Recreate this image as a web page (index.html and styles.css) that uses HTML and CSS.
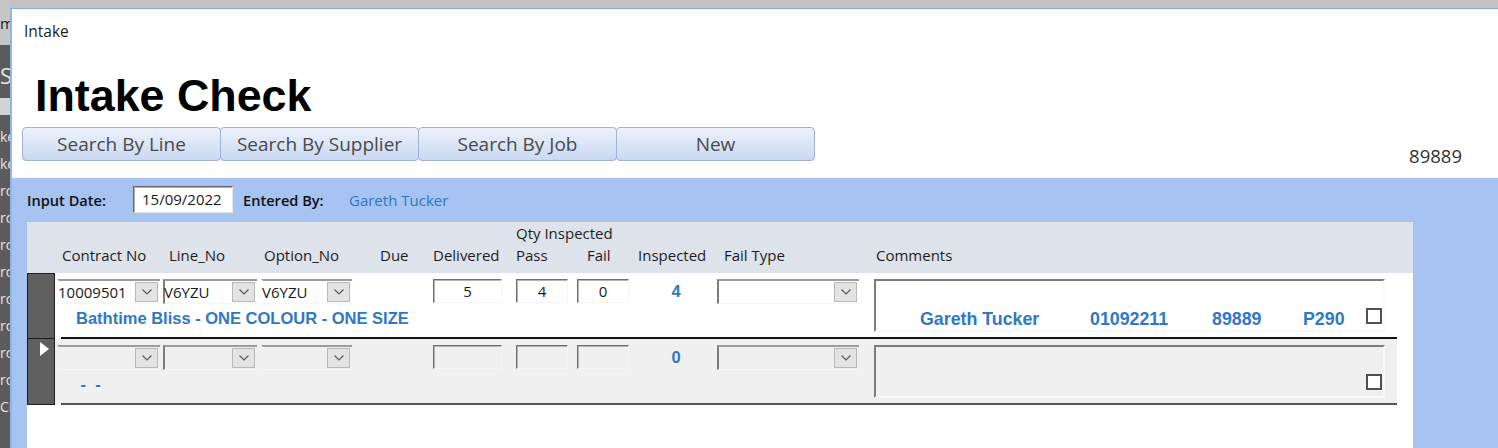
FILE: index.html
```html
<!DOCTYPE html>
<html lang="en">
<head>
<meta charset="utf-8">
<title>Intake</title>
<link rel="stylesheet" href="styles.css">
</head>
<body>
<div class="desktop">
  <aside class="nav">
    <div class="nav-top">m</div>
    <div class="nav-head">S</div>
    <div class="nav-sep"></div>
    <ul class="nav-list">
      <li>ke</li><li>ke</li><li>rc</li><li>rc</li><li>rc</li><li>rc</li><li>rc</li><li>rc</li><li>rc</li><li>rc</li><li>Ci</li>
    </ul>
  </aside>
  <div class="win-wrap">
    <main class="window">
      <div class="caption">Intake</div>
      <h1 class="title">Intake Check</h1>
      <div class="toolbar">
        <button class="btn">Search By Line</button>
        <button class="btn">Search By Supplier</button>
        <button class="btn">Search By Job</button>
        <button class="btn">New</button>
        <span class="job">89889</span>
      </div>
      <section class="band">
        <div class="date-row">
          <span class="lbl-b">Input Date:</span>
          <span class="date-input">15/09/2022</span>
          <span class="lbl-b lbl-gap">Entered By:</span>
          <span class="entered">Gareth Tucker</span>
        </div>
        <div class="panel">
          <div class="head">
            <span class="h h-contract">Contract No</span>
            <span class="h h-line">Line_No</span>
            <span class="h h-option">Option_No</span>
            <span class="h h-due">Due</span>
            <span class="h h-deliv">Delivered</span>
            <span class="h h-qty">Qty Inspected</span>
            <span class="h h-pass">Pass</span>
            <span class="h h-fail">Fail</span>
            <span class="h h-insp">Inspected</span>
            <span class="h h-type">Fail Type</span>
            <span class="h h-comm">Comments</span>
          </div>

          <div class="rec">
            <div class="selector"></div>
            <div class="rec-body">
              <div class="fields">
                <div class="combo c-contract"><span class="combo-text">10009501</span><span class="drop"><svg width="10" height="6" viewBox="0 0 10 6"><polyline points="0.5,0.5 5,5 9.5,0.5" fill="none" stroke="#5a5a5a" stroke-width="1.2"/></svg></span></div>
                <div class="combo c-line sunk-left"><span class="combo-text">V6YZU</span><span class="drop"><svg width="10" height="6" viewBox="0 0 10 6"><polyline points="0.5,0.5 5,5 9.5,0.5" fill="none" stroke="#5a5a5a" stroke-width="1.2"/></svg></span></div>
                <div class="combo c-option"><span class="combo-text">V6YZU</span><span class="drop"><svg width="10" height="6" viewBox="0 0 10 6"><polyline points="0.5,0.5 5,5 9.5,0.5" fill="none" stroke="#5a5a5a" stroke-width="1.2"/></svg></span></div>
                <div class="box f-deliv">5</div>
                <div class="box f-pass">4</div>
                <div class="box f-fail">0</div>
                <div class="insp">4</div>
                <div class="combo c-type sunk-left"><span class="combo-text"></span><span class="drop"><svg width="10" height="6" viewBox="0 0 10 6"><polyline points="0.5,0.5 5,5 9.5,0.5" fill="none" stroke="#5a5a5a" stroke-width="1.2"/></svg></span></div>
                <div class="comments">
                  <div class="comm-line">
                    <span class="cf cf-name">Gareth Tucker</span>
                    <span class="cf">01092211</span>
                    <span class="cf">89889</span>
                    <span class="cf">P290</span>
                    <span class="check"></span>
                  </div>
                </div>
                <div class="desc">Bathtime Bliss - ONE COLOUR - ONE SIZE</div>
              </div>
              <div class="rule"></div>
            </div>
          </div>

          <div class="rec rec-new">
            <div class="selector"><span class="arrow"></span></div>
            <div class="rec-body">
              <div class="fields">
                <div class="combo c-contract"><span class="combo-text"></span><span class="drop"><svg width="10" height="6" viewBox="0 0 10 6"><polyline points="0.5,0.5 5,5 9.5,0.5" fill="none" stroke="#5a5a5a" stroke-width="1.2"/></svg></span></div>
                <div class="combo c-line sunk-left"><span class="combo-text"></span><span class="drop"><svg width="10" height="6" viewBox="0 0 10 6"><polyline points="0.5,0.5 5,5 9.5,0.5" fill="none" stroke="#5a5a5a" stroke-width="1.2"/></svg></span></div>
                <div class="combo c-option"><span class="combo-text"></span><span class="drop"><svg width="10" height="6" viewBox="0 0 10 6"><polyline points="0.5,0.5 5,5 9.5,0.5" fill="none" stroke="#5a5a5a" stroke-width="1.2"/></svg></span></div>
                <div class="box f-deliv"></div>
                <div class="box f-pass"></div>
                <div class="box f-fail"></div>
                <div class="insp">0</div>
                <div class="combo c-type sunk-left"><span class="combo-text"></span><span class="drop"><svg width="10" height="6" viewBox="0 0 10 6"><polyline points="0.5,0.5 5,5 9.5,0.5" fill="none" stroke="#5a5a5a" stroke-width="1.2"/></svg></span></div>
                <div class="comments">
                  <div class="comm-line">
                    <span class="cf cf-name"></span>
                    <span class="cf"></span>
                    <span class="cf"></span>
                    <span class="cf"></span>
                    <span class="check"></span>
                  </div>
                </div>
                <div class="desc"> -  - </div>
              </div>
              <div class="rule"></div>
            </div>
          </div>
        </div>
      </section>
    </main>
  </div>
</div>
</body>
</html>
```

FILE: styles.css
```css
html, body {
  margin: 0;
  height: 448px;
  overflow: hidden;
}
body {
  background: #c2c2c2;
  font-family: "Open Sans", "Noto Sans", sans-serif;
}
.desktop {
  display: flex;
  height: 448px;
}

/* background application navigation strip */
.nav {
  width: 10px;
  flex: none;
  overflow: hidden;
  background: #5b5b5b;
  color: #e4e4e4;
  white-space: nowrap;
  font-size: 14px;
}
.nav-top {
  height: 45px;
  box-sizing: border-box;
  padding-top: 12px;
  line-height: 22px;
  background: #c6c6c6;
  color: #222;
  font-size: 15px;
}
.nav-head {
  height: 53px;
  box-sizing: border-box;
  padding-top: 19px;
  line-height: 22px;
  font-size: 22px;
}
.nav-sep {
  height: 17px;
  background: #d3d3d3;
}
.nav-list {
  list-style: none;
  margin: 0;
  padding: 8px 0 0;
}
.nav-list li {
  height: 27px;
  line-height: 27px;
}

/* form window */
.win-wrap {
  flex: 1;
  padding-top: 8px;
  display: flex;
  flex-direction: column;
  min-width: 0;
}
.window {
  flex: 1;
  background: #fff;
  border-top: 1px solid #86aee6;
  border-left: 2px solid #8fb5ea;
  display: flex;
  flex-direction: column;
  min-height: 0;
}
.caption {
  font-size: 15.5px;
  line-height: 21px;
  padding: 12px 0 0 12px;
  color: #1e1e1e;
}
.title {
  margin: 29px 0 0;
  padding-left: 23px;
  font: bold 44.8px/49px "Liberation Sans", Arial, sans-serif;
  color: #000;
}
.toolbar {
  display: flex;
  align-items: flex-start;
  margin-top: 7px;
  padding-left: 10px;
  height: 34px;
}
.btn {
  width: 199px;
  height: 34px;
  box-sizing: border-box;
  margin: 0 0 0 -1px;
  padding: 0;
  border: 1px solid #9fb3d7;
  border-radius: 4px;
  background: linear-gradient(#edf2fb, #d9e4f6 55%, #c9d8f1);
  font-family: "Open Sans", "Noto Sans", sans-serif;
  font-size: 19px;
  color: #4a4a4a;
}
.btn:first-child {
  margin-left: 0;
}
.job {
  margin: 16px 36px 0 auto;
  font-size: 18.5px;
  line-height: 25px;
  color: #333;
}

/* blue detail band */
.band {
  flex: 1;
  margin-top: 17px;
  background: #a6c3f1;
  padding: 8px 0 0 15px;
  display: flex;
  flex-direction: column;
  min-height: 0;
}
.date-row {
  display: flex;
  align-items: center;
  height: 27px;
}
.lbl-b {
  width: 106px;
  font-size: 14.6px;
  font-weight: 600;
  color: #111;
}
.lbl-gap {
  margin-left: 10px;
}
.date-input {
  width: 100px;
  height: 27px;
  box-sizing: border-box;
  background: #fff;
  border: 1px solid;
  border-color: #6a6a6a #e6e6e6 #e6e6e6 #6a6a6a;
  box-shadow: inset 1px 1px 0 #b0b0b0;
  padding-left: 8px;
  font-size: 15px;
  line-height: 25px;
  color: #1a1a1a;
}
.entered {
  font-size: 15px;
  color: #2f78c4;
}

.panel {
  width: 1386px;
  flex: 1;
  margin-top: 9px;
  background: #fff;
}
.head,
.fields {
  display: grid;
  grid-template-columns: 106px 98px 104px 68px 83px 61px 52px 88px 157px 511px;
}
.head {
  height: 51px;
  box-sizing: border-box;
  padding-left: 30px;
  grid-template-rows: 22px 22px;
  background: #dee2ea;
}
.h {
  font-size: 15px;
  line-height: 22px;
  color: #1e1e1e;
  grid-row: 2;
  white-space: nowrap;
}
.h-contract { grid-column: 1; padding-left: 5px; }
.h-line { grid-column: 2; padding-left: 6px; }
.h-option { grid-column: 3; padding-left: 3px; }
.h-due { grid-column: 4; padding-left: 15px; }
.h-deliv { grid-column: 5; }
.h-qty { grid-column: 6 / span 2; grid-row: 1; }
.h-pass { grid-column: 6; }
.h-fail { grid-column: 7; padding-left: 10px; }
.h-insp { grid-column: 8; padding-left: 9px; }
.h-type { grid-column: 9; padding-left: 7px; }
.h-comm { grid-column: 10; padding-left: 2px; }

/* records */
.rec {
  display: flex;
  height: 66px;
}
.selector {
  width: 28px;
  flex: none;
  box-sizing: border-box;
  background: #5f5f5f;
  border: 1px solid #1c1c1c;
  padding: 3px 0 0 12px;
}
.rec-new .selector {
  border-top: none;
}
.arrow {
  display: block;
  width: 0;
  height: 0;
  border-left: 9px solid #fff;
  border-top: 7.5px solid transparent;
  border-bottom: 7.5px solid transparent;
}
.rec-body {
  width: 1342px;
  display: flex;
  flex-direction: column;
  background: #fff;
}
.rec-new .rec-body {
  background: #f0f0f0;
}
.fields {
  height: 64px;
  box-sizing: border-box;
  padding: 6px 0 0 2px;
  grid-template-rows: 25px 19px;
  row-gap: 5px;
  align-items: start;
}
.rule {
  height: 2px;
  margin-left: 6px;
  background: #111;
}
.rec-new .rule {
  background: #555;
}

.combo {
  grid-row: 1;
  height: 25px;
  box-sizing: border-box;
  display: flex;
  align-items: center;
  border-top: 2px solid #9c9c9c;
  border-left: 2px solid transparent;
  border-bottom: 1px solid #f6f6f6;
}
.sunk-left {
  border-left-color: #7c7c7c;
}
.combo-text {
  flex: 1;
  font-size: 15px;
  line-height: 20px;
  color: #1a1a1a;
  margin-left: -1px;
  white-space: nowrap;
}
.drop {
  width: 23px;
  height: 20px;
  box-sizing: border-box;
  margin-right: 2px;
  border: 1px solid #b8b8b8;
  background: #e3e3e3;
  display: flex;
  align-items: center;
  justify-content: center;
}
.c-contract { grid-column: 1; width: 103px; }
.c-line { grid-column: 2; width: 94px; }
.c-option { grid-column: 3; width: 91px; }
.c-type { grid-column: 9; width: 142px; }

.box {
  grid-row: 1;
  height: 24px;
  box-sizing: border-box;
  border: 1px solid;
  border-color: #6e6e6e #f4f4f4 #f4f4f4 #6e6e6e;
  box-shadow: inset 1px 1px 0 #b4b4b4;
  text-align: center;
  font-size: 15px;
  line-height: 22px;
  color: #1a1a1a;
}
.f-deliv { grid-column: 5; width: 69px; }
.f-pass { grid-column: 6; width: 52px; }
.f-fail { grid-column: 7; width: 52px; }

.insp {
  grid-column: 8;
  grid-row: 1;
  align-self: center;
  padding-left: 6px;
  text-align: center;
  font: bold 16.5px/19px "Liberation Sans", Arial, sans-serif;
  color: #2f78c4;
}
.comments {
  grid-column: 10;
  grid-row: 1 / span 2;
  height: 53px;
  box-sizing: border-box;
  border: 2px solid;
  border-color: #7b7b7b #f8f8f8 #f8f8f8 #7b7b7b;
}
.comm-line {
  display: grid;
  grid-template-columns: 44px 170px 122px 91px 63px 16px;
  padding-top: 28px;
}
.cf {
  font: bold 17.8px/20px "Liberation Sans", Arial, sans-serif;
  color: #2f78c4;
  white-space: nowrap;
}
.cf-name {
  grid-column: 2;
}
.check {
  grid-column: 6;
  width: 16px;
  height: 16px;
  box-sizing: border-box;
  margin-top: -1px;
  border: 2px solid #505050;
  background: #fff;
}
.desc {
  grid-column: 1 / 9;
  grid-row: 2;
  padding-left: 19px;
  font: bold 16.5px/19px "Liberation Sans", Arial, sans-serif;
  color: #2f78c4;
  white-space: pre;
}
```
